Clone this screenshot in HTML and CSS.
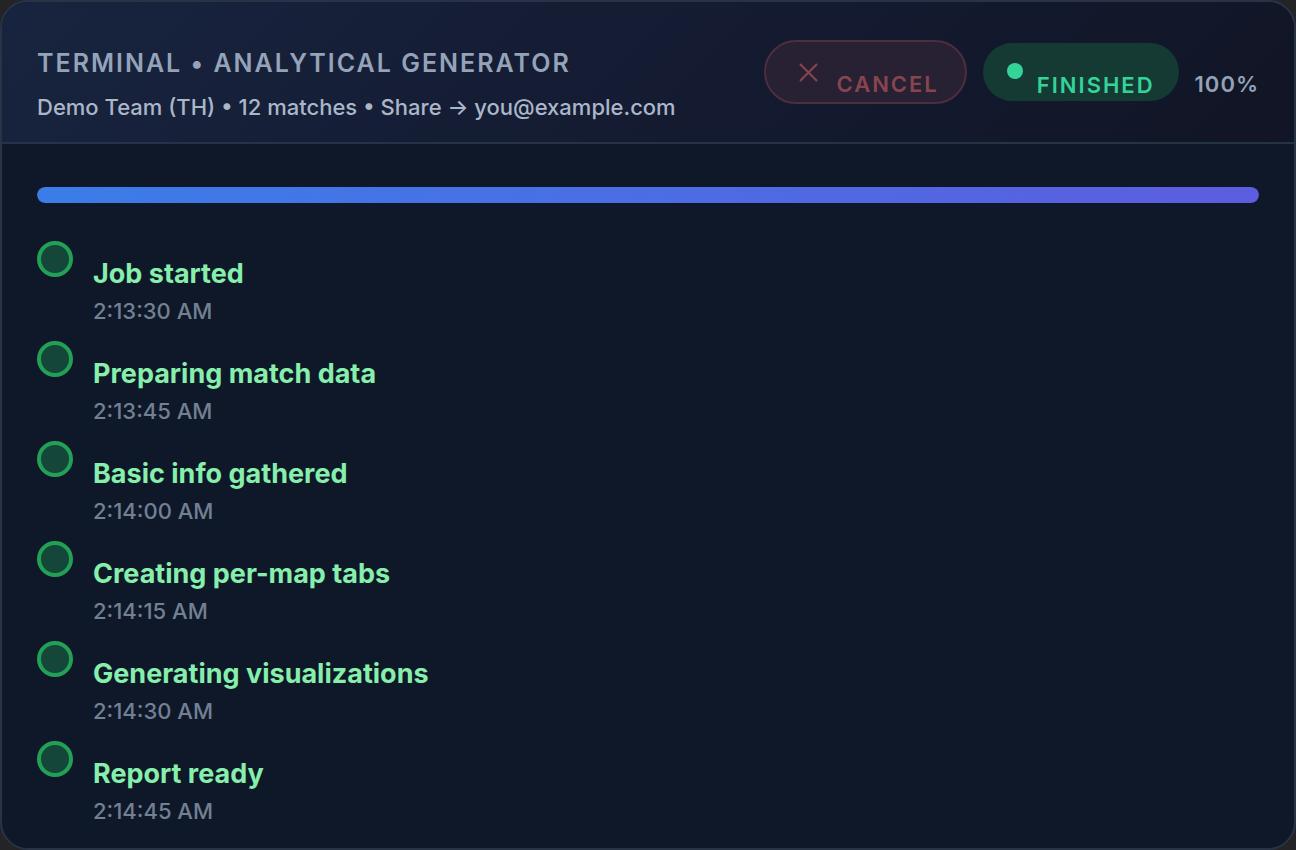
FILE: index.html
```html
<!DOCTYPE html>
<html lang="en">
<head>
<meta charset="utf-8">
<title>Terminal • Analytical Generator</title>
<link rel="stylesheet" href="styles.css">
</head>
<body>
<main class="panel">
  <header class="head">
    <div class="heading">
      <h1 class="title">Terminal • Analytical Generator</h1>
      <p class="subtitle">Demo Team (TH) • 12 matches • Share → you@example.com</p>
    </div>
    <div class="actions">
      <button class="cancel" type="button" disabled>
        <svg class="cross" viewBox="0 0 20 20" aria-hidden="true"><path d="M2 2 19 19M19 2 2 19"/></svg>
        <span class="pill-text">Cancel</span>
      </button>
      <div class="status"><span class="dot"></span><span class="pill-text">Finished</span></div>
      <span class="percent">100%</span>
    </div>
  </header>
  <section class="body">
    <div class="track" role="progressbar" aria-label="Progress" aria-valuenow="100"><div class="fill" style="width:100%"></div></div>
    <ol class="steps">
      <li class="step"><span class="mark"></span><div class="info"><p class="name">Job started</p><time class="time">2:13:30 AM</time></div></li>
      <li class="step"><span class="mark"></span><div class="info"><p class="name">Preparing match data</p><time class="time">2:13:45 AM</time></div></li>
      <li class="step"><span class="mark"></span><div class="info"><p class="name">Basic info gathered</p><time class="time">2:14:00 AM</time></div></li>
      <li class="step"><span class="mark"></span><div class="info"><p class="name">Creating per-map tabs</p><time class="time">2:14:15 AM</time></div></li>
      <li class="step"><span class="mark"></span><div class="info"><p class="name">Generating visualizations</p><time class="time">2:14:30 AM</time></div></li>
      <li class="step"><span class="mark"></span><div class="info"><p class="name">Report ready</p><time class="time">2:14:45 AM</time></div></li>
    </ol>
  </section>
</main>
</body>
</html>
```
FILE: styles.css
```css
* { box-sizing: border-box; }
body { margin: 0; background: #242426; font-family: Inter, sans-serif; }
h1, p, ol { margin: 0; padding: 0; }
.panel { min-height: 100vh; background: #0f1828; border: 2px solid #283346; border-radius: 28px; overflow: hidden; }
.head { display: flex; justify-content: space-between; align-items: flex-start; padding: 38px 35px 21px; border-bottom: 2px solid #263346; background: linear-gradient(135deg, #18243f, #151d35 40%, #111525); }
.heading { padding-top: 7px; }
.title { font-size: 25px; line-height: 32px; font-weight: 600; letter-spacing: 2px; text-transform: uppercase; color: #94a3b8; }
.subtitle { margin-top: 14px; font-size: 22px; line-height: 28px; font-weight: 500; color: #abb7c9; }
.actions { display: flex; align-items: center; gap: 16px; }
.cancel, .status { display: flex; border-radius: 32px; font: 600 22px/28px Inter, sans-serif; letter-spacing: 2px; text-transform: uppercase; }
.cancel { height: 64px; padding: 20px 26px 0 32px; gap: 18px; border: 2px solid #4d2d3e; background: #272133; color: #88454f; }
.cross { width: 20px; height: 20px; fill: none; stroke: currentColor; stroke-width: 2; }
.pill-text { padding-top: 8px; }
.status { height: 58px; padding: 20px 24px 0; gap: 14px; background: #153a33; color: #34d399; }
.dot { width: 16px; height: 16px; border-radius: 50%; background: #34d399; }
.percent { padding-top: 24px; font-size: 22px; line-height: 28px; font-weight: 600; letter-spacing: 1px; color: #94a3b8; }
.body { padding: 43px 35px 20px; }
.track { height: 16px; border-radius: 8px; overflow: hidden; background: #1e293b; }
.fill { height: 100%; border-radius: 8px; background: linear-gradient(90deg, #3b7de8, #5c5de0); }
.steps { display: grid; gap: 16px; margin-top: 38px; list-style: none; }
.step { display: flex; gap: 20px; height: 84px; }
.mark { width: 36px; height: 36px; border: 4px solid #22a055; border-radius: 50%; background: #15463a; }
.info { padding-top: 14px; }
.name { font-size: 27px; line-height: 38px; font-weight: 650; color: #86efac; }
.time { display: block; margin-top: 4px; font-size: 22px; line-height: 28px; font-weight: 500; color: #728094; }
```
